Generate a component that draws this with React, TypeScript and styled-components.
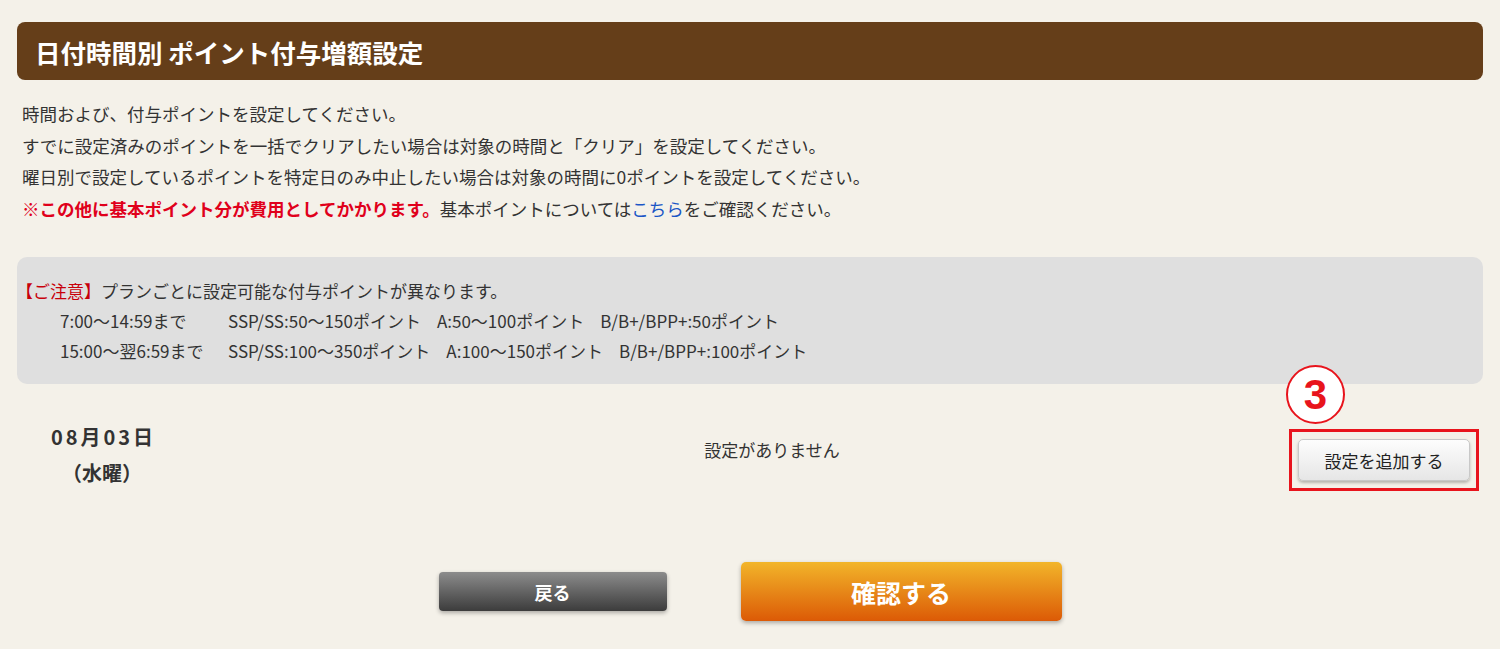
import React from "react";
import styled, { createGlobalStyle } from "styled-components";

const GlobalStyle = createGlobalStyle`
  html, body {
    margin: 0;
    padding: 0;
    background: #f4f1e9;
  }
  body {
    font-family: "Noto Sans CJK JP", "Noto Sans", sans-serif;
    color: #333;
  }
`;

const Page = styled.div`
  padding: 22px 17px 0;
  min-height: 649px;
  box-sizing: border-box;
`;

const Heading = styled.h1`
  margin: 0;
  height: 58px;
  display: flex;
  align-items: center;
  padding-left: 18px;
  background: #653e19;
  border-radius: 8px;
  color: #fff;
  font-size: 25.5px;
  font-weight: bold;
`;

const Intro = styled.div`
  margin: 18px 0 0 5px;
  font-size: 17.5px;
  line-height: 31.5px;
`;

const Line = styled.p`
  margin: 0;
`;

const Warn = styled.strong`
  color: #e0001b;
  font-weight: bold;
`;

const Link = styled.a`
  color: #1a56c6;
  text-decoration: none;
`;

const Notice = styled.div`
  margin-top: 33px;
  background: #dfdfdf;
  border-radius: 10px;
  padding: 19px 0 18px 0;
  font-size: 17px;
  line-height: 30px;
`;

const NoticeTitle = styled.span`
  color: #c8000a;
  margin-left: -1px;
`;

const PlanRow = styled.div`
  display: grid;
  grid-template-columns: 168px auto;
  justify-content: start;
  padding-left: 43px;
`;

const Rates = styled.div`
  display: flex;
  gap: 16px;
`;

const DayRow = styled.div`
  margin-top: 45px;
  height: 62px;
  display: grid;
  grid-template-columns: 170px 1fr auto;
  align-items: center;
`;

const DateCell = styled.div`
  text-align: center;
  font-size: 20px;
  font-weight: bold;
  line-height: 36px;
  margin-top: -10px;
`;

const DateText = styled.span`
  letter-spacing: 3px;
  margin-right: -3px;
`;

const Empty = styled.div`
  text-align: center;
  padding-left: 68px;
  font-size: 17px;
  margin-top: -22px;
`;

const Marked = styled.div`
  position: relative;
  margin-right: 4px;
  border: 3px solid #e8141c;
  padding: 7px 6px;
`;

const Badge = styled.span`
  position: absolute;
  left: -6px;
  top: -67px;
  width: 55px;
  height: 55px;
  border: 2px solid #e8141c;
  border-radius: 50%;
  background: #fff;
  color: #e8141c;
  font-family: "Liberation Sans", Arial, sans-serif;
  font-weight: bold;
  font-size: 42px;
  display: flex;
  align-items: center;
  justify-content: center;
`;

const AddButton = styled.button`
  width: 172px;
  height: 42px;
  border: 1px solid #c8c8c8;
  border-radius: 5px;
  background: linear-gradient(#fdfdfd, #e6e6e6);
  box-shadow: 0 2px 3px rgba(0, 0, 0, 0.25);
  font-family: inherit;
  font-size: 17px;
  color: #222;
  cursor: pointer;
`;

const Actions = styled.div`
  margin-top: 71px;
  display: flex;
  justify-content: center;
  align-items: center;
  gap: 74px;
`;

const ActionButton = styled.button<{ $primary?: boolean }>`
  width: ${(p) => (p.$primary ? "321px" : "228px")};
  height: ${(p) => (p.$primary ? "59px" : "39px")};
  border: none;
  border-radius: ${(p) => (p.$primary ? "5px" : "4px")};
  background: ${(p) =>
    p.$primary
      ? "linear-gradient(#f2b52a, #dc5a06)"
      : "linear-gradient(#8c8c8c, #3c3c3c)"};
  box-shadow: 0 2px 4px rgba(0, 0, 0, 0.3);
  color: #fff;
  font-family: inherit;
  font-weight: bold;
  font-size: ${(p) => (p.$primary ? "25px" : "18px")};
  cursor: pointer;
`;

const plans = [
  {
    time: "7:00〜14:59まで",
    rates: ["SSP/SS:50〜150ポイント", "A:50〜100ポイント", "B/B+/BPP+:50ポイント"],
  },
  {
    time: "15:00〜翌6:59まで",
    rates: ["SSP/SS:100〜350ポイント", "A:100〜150ポイント", "B/B+/BPP+:100ポイント"],
  },
];

const App = () => {
  return (
    <Page>
      <GlobalStyle />
      <Heading>日付時間別 ポイント付与増額設定</Heading>

      <Intro>
        <Line>時間および、付与ポイントを設定してください。</Line>
        <Line>すでに設定済みのポイントを一括でクリアしたい場合は対象の時間と「クリア」を設定してください。</Line>
        <Line>曜日別で設定しているポイントを特定日のみ中止したい場合は対象の時間に0ポイントを設定してください。</Line>
        <Line>
          <Warn>※この他に基本ポイント分が費用としてかかります。</Warn>
          基本ポイントについては<Link href="#">こちら</Link>をご確認ください。
        </Line>
      </Intro>

      <Notice>
        <Line>
          <NoticeTitle>【ご注意】</NoticeTitle>プランごとに設定可能な付与ポイントが異なります。
        </Line>
        {plans.map((plan) => (
          <PlanRow key={plan.time}>
            <span>{plan.time}</span>
            <Rates>
              {plan.rates.map((r) => (
                <span key={r}>{r}</span>
              ))}
            </Rates>
          </PlanRow>
        ))}
      </Notice>

      <DayRow>
        <DateCell>
          <DateText>08月03日</DateText>
          <br />
          （水曜）
        </DateCell>
        <Empty>設定がありません</Empty>
        <Marked>
          <Badge>3</Badge>
          <AddButton>設定を追加する</AddButton>
        </Marked>
      </DayRow>

      <Actions>
        <ActionButton>戻る</ActionButton>
        <ActionButton $primary>確認する</ActionButton>
      </Actions>
    </Page>
  );
};

export default App;
